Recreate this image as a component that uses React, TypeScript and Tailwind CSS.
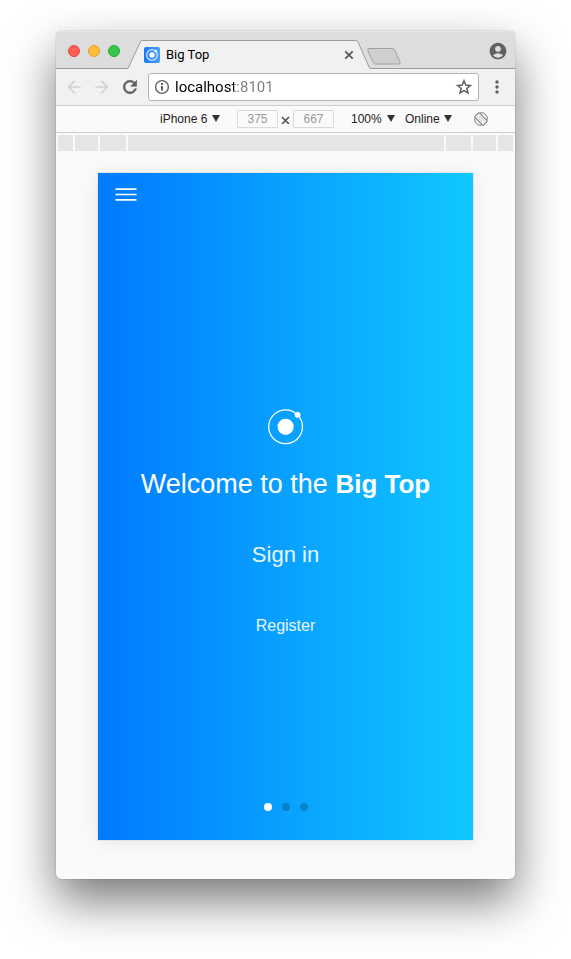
import { MdAccountCircle, MdArrowBack, MdArrowForward, MdMoreVert } from "react-icons/md";

function Favicon() {
  return (
    <svg viewBox="0 0 16 16" className="size-4 shrink-0" aria-hidden="true">
      <defs>
        <linearGradient id="fav" x1="0" y1="0" x2="1" y2="0">
          <stop offset="0" stopColor="#1a78fb" />
          <stop offset="1" stopColor="#4a9dfb" />
        </linearGradient>
      </defs>
      <rect width="16" height="16" rx="2" fill="url(#fav)" />
      <circle cx="8" cy="8" r="5.3" fill="none" stroke="#d3e6ff" strokeWidth="1.2" />
      <circle cx="8" cy="8" r="2.7" fill="#fff" />
      <circle cx="11.8" cy="4.2" r="1.4" fill="#e8f2ff" />
    </svg>
  );
}

function ReloadIcon() {
  return (
    <svg viewBox="0 0 24 24" className="size-5" fill="currentColor" stroke="currentColor" strokeWidth="0.7" aria-hidden="true">
      <path d="M17.65 6.35A7.958 7.958 0 0 0 12 4c-4.42 0-7.990 3.580-7.990 8s3.570 8 7.990 8c3.730 0 6.840-2.550 7.730-6h-2.080A5.990 5.990 0 0 1 12 18c-3.310 0-6-2.690-6-6s2.690-6 6-6c1.660 0 3.140.69 4.220 1.780L13 11h7V4l-2.350 2.350z" />
    </svg>
  );
}

function InfoIcon() {
  return (
    <svg viewBox="0 0 18 18" className="size-[18px] shrink-0" aria-hidden="true">
      <circle cx="9" cy="9" r="6.400" fill="none" stroke="currentColor" strokeWidth="1.400" />
      <path d="M9 8V12.500M9 5V6.900" stroke="currentColor" strokeWidth="2" />
    </svg>
  );
}

function StarIcon() {
  return (
    <svg viewBox="0 0 18 18" className="size-[18px]" aria-hidden="true">
      <path
        d="M9 2.800L10.800 7.100L15.400 7.500L11.900 10.500L13 15L9 12.600L5 15L6.100 10.500L2.600 7.500L7.200 7.100Z"
        fill="none"
        stroke="currentColor"
        strokeWidth="1.500"
      />
    </svg>
  );
}

function TabStrip() {
  return (
    <header className="flex h-[38px] items-end rounded-t-[5px] bg-[#dddddd] pr-[7px] pl-3 shadow-[inset_0_-1px_0_#9b9b9b,inset_0_1px_0_#e6e6e6]">
      <div className="mb-3 flex gap-2">
        <button aria-label="Close window" className="size-3 rounded-full border border-[#e2463f] bg-[#ff5f57]" />
        <button aria-label="Minimise window" className="size-3 rounded-full border border-[#dfa032] bg-[#ffbd3a]" />
        <button aria-label="Zoom window" className="size-3 rounded-full border border-[#27aa35] bg-[#34c84a]" />
      </div>
      <div className="relative ml-2 h-[29px] w-[243px]">
        <svg viewBox="0 0 243 29" className="absolute inset-0 size-full" aria-hidden="true">
          <path d="M0 29V28.5L12.4 1.8Q13 .5 14.3 .5H228Q229.3 .5 229.9 1.8L241 27Q241.7 28.5 243 28.5V29Z" fill="#f1f1f1" />
          <path
            d="M0 28.5L12.4 1.8Q13 .5 14.3 .5H228Q229.3 .5 229.9 1.8L241 27Q241.7 28.5 243 28.5"
            fill="none"
            stroke="#9b9b9b"
          />
        </svg>
        <div className="relative flex h-full items-center pt-px pr-[17px] pl-4">
          <Favicon />
          <span className="ml-1.5 flex-1 text-[13px] leading-4 text-black">Big Top</span>
          <button aria-label="Close tab" className="size-2.5">
            <svg viewBox="0 0 10 10" className="size-full" aria-hidden="true">
              <path d="M1.3 1.3L8.7 8.7M8.7 1.3L1.3 8.7" stroke="#555" strokeWidth="1.7" />
            </svg>
          </button>
        </div>
      </div>
      <button aria-label="New tab" className="relative mb-1 -ml-1 h-[17px] w-[34px]">
        <svg viewBox="0 0 34 17" className="size-full" aria-hidden="true">
          <path
            d="M2 .5H25.5Q27 .5 27.6 1.8L33 14Q33.8 16 32 16H8.500Q7 16 6.300 14.600L.8 2.300Q.2 .5 2 .5Z"
            fill="#cfcfcf"
            stroke="#a0a0a0"
          />
        </svg>
      </button>
      <button aria-label="Account" className="mb-2 ml-auto text-[#616161]">
        <MdAccountCircle size={20} />
      </button>
    </header>
  );
}

function Toolbar() {
  return (
    <div className="flex h-[37px] items-center gap-2 border-b border-[#cfcfcf] bg-[#f1f1f1] px-2 text-[#5f5f5f]">
      <button aria-label="Back" className="text-[#d2d2d2]">
        <MdArrowBack size={20} />
      </button>
      <button aria-label="Forward" className="text-[#d2d2d2]">
        <MdArrowForward size={20} />
      </button>
      <button aria-label="Reload">
        <ReloadIcon />
      </button>
      <div className="flex h-7 min-w-0 flex-1 items-center gap-1 rounded-[3px] border border-[#b4b4b4] bg-white pr-[5px] pl-1">
        <InfoIcon />
        <input
          aria-label="Address"
          defaultValue="localhost:8101"
          className="min-w-0 flex-1 bg-[linear-gradient(90deg,#000_59px,#7d7d7d_59px)] bg-clip-text text-[15px] leading-5 text-transparent outline-none"
        />
        <button aria-label="Bookmark this page">
          <StarIcon />
        </button>
      </div>
      <button aria-label="Menu">
        <MdMoreVert size={20} />
      </button>
    </div>
  );
}

function Dropdown({ label, value, className }: { label: string; value: string; className: string }) {
  return (
    <div className={`relative ${className}`}>
      <select aria-label={label} className="block w-full appearance-none leading-4 text-[#222] outline-none">
        <option>{value}</option>
      </select>
      <svg viewBox="0 0 8 7" className="pointer-events-none absolute top-1 right-0 h-[7px] w-2" aria-hidden="true">
        <path d="M0 0H8L4 7Z" fill="#333" />
      </svg>
    </div>
  );
}

function SizeField({ label, value }: { label: string; value: string }) {
  return (
    <input
      aria-label={label}
      defaultValue={value}
      className="h-[18px] w-[41px] rounded-[1px] border border-[#dadada] bg-[#fafafa] text-center text-[#999] outline-none"
    />
  );
}

function DeviceBar() {
  return (
    <div className="flex h-[27px] items-center justify-end border-b border-[#cccccc] bg-[#fafafa] pr-[27px] font-['Liberation_Sans',Arial,sans-serif] text-xs">
      <Dropdown label="Device" value="iPhone 6" className="w-[60px]" />
      <div className="mx-[17px] flex items-center">
        <SizeField label="Width" value="375" />
        <svg viewBox="0 0 15 10" className="h-2.5 w-[15px]" aria-hidden="true">
          <path d="M4 3L11 10M11 3L4 10" stroke="#555" strokeWidth="1.7" />
        </svg>
        <SizeField label="Height" value="667" />
      </div>
      <Dropdown label="Zoom" value="100%" className="w-11" />
      <Dropdown label="Network" value="Online" className="ml-2.5 w-[47px]" />
      <button aria-label="Rotate" className="ml-[22px] size-3.5">
        <svg viewBox="0 0 14 14" className="size-full" fill="none" stroke="#777" aria-hidden="true">
          <g transform="rotate(-45 7 7)">
            <rect x="3.800" y="1" width="6.400" height="12" rx="1" />
            <path d="M5.900 3V11M8.100 3V11" strokeWidth="0.500" />
          </g>
          <path d="M6.500 .6A6.400 6.400 0 0 1 13.400 7.500M7.500 13.400A6.400 6.400 0 0 1 .6 6.500" />
        </svg>
      </button>
    </div>
  );
}

function Ruler() {
  return (
    <div className="flex h-4 gap-0.5 px-0.5 *:bg-[#e5e5e5]">
      <div className="w-[15px]" />
      <div className="w-[23px]" />
      <div className="w-[26px]" />
      <div className="flex-1" />
      <div className="w-[25px]" />
      <div className="w-[23px]" />
      <div className="w-[15px]" />
    </div>
  );
}

function Phone() {
  return (
    <main className="mx-[42px] mt-[22px] mb-[39px] flex min-h-[667px] flex-col bg-[linear-gradient(90deg,#007aff,#10c8ff)] font-['Liberation_Sans',Arial,sans-serif] text-white shadow-[0_0_0_1px_rgba(0,0,0,0.06),0_2px_20px_rgba(0,0,0,0.08)]">
      <button aria-label="Open menu" className="mt-[15px] ml-[17px] h-[13px] w-[22px]">
        <svg viewBox="0 0 22 13" className="size-full" aria-hidden="true">
          <path d="M.5 1.200H21.500M.5 6.500H21.500M.5 11.800H21.500" stroke="#fff" strokeWidth="1.700" />
        </svg>
      </button>
      <section className="flex flex-col items-center pt-52">
        <svg viewBox="0 0 36 36" className="size-9" aria-hidden="true">
          <circle cx="17.600" cy="17.800" r="16.900" fill="none" stroke="#fff" strokeWidth="1.300" />
          <circle cx="17.600" cy="17.800" r="8.100" fill="#fff" />
          <circle cx="29.600" cy="5.800" r="2.900" fill="#fff" />
        </svg>
        <h1 className="mt-[23px] text-[27px] leading-8 whitespace-nowrap">
          Welcome to the <strong className="text-[26px]">Big Top</strong>
        </h1>
        <button className="mt-[41px] text-[22px] leading-7 text-white/90">Sign in</button>
        <button className="mt-[45px] text-base leading-6 text-white/90">Register</button>
      </section>
      <nav aria-label="Slides" className="mt-auto mb-[29px] flex justify-center gap-2.5">
        <button aria-label="Slide 1" className="size-2 rounded-full bg-white" />
        <button aria-label="Slide 2" className="size-2 rounded-full bg-black/20" />
        <button aria-label="Slide 3" className="size-2 rounded-full bg-black/20" />
      </nav>
    </main>
  );
}

export default function App() {
  return (
    <div className="bg-white px-14 pt-[31px] pb-20 font-[Roboto,sans-serif]">
      <div className="flex flex-col rounded-[5px] bg-[#fafafa] shadow-[0_0_1px_rgba(0,0,0,0.6),0_22px_48px_rgba(0,0,0,0.53)]">
        <TabStrip />
        <Toolbar />
        <DeviceBar />
        <div className="flex flex-col pt-0.5">
          <Ruler />
          <Phone />
        </div>
      </div>
    </div>
  );
}
